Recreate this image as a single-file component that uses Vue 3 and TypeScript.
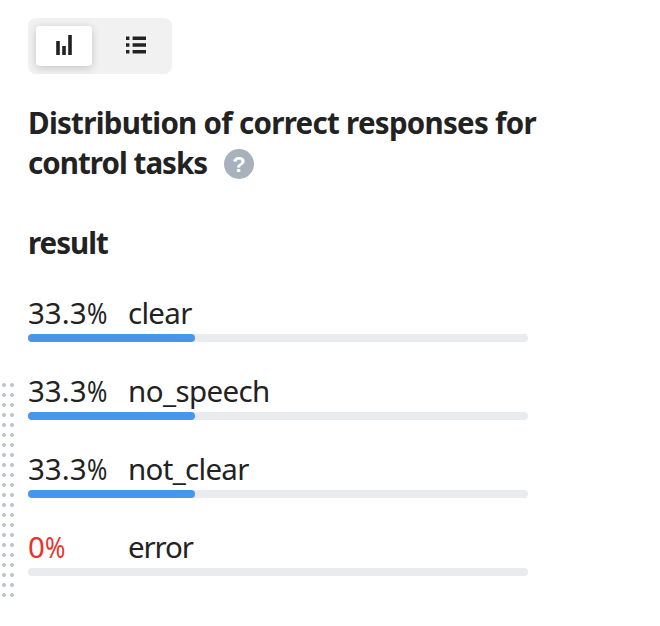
<script setup lang="ts">
import { ref } from 'vue'

interface ResultRow {
  name: string
  share: number
}

const view = ref<'chart' | 'list'>('chart')

const rows: ResultRow[] = [
  { name: 'clear', share: 33.3 },
  { name: 'no_speech', share: 33.3 },
  { name: 'not_clear', share: 33.3 },
  { name: 'error', share: 0 },
]
</script>

<template>
  <main class="panel">
    <div class="drag-handle"></div>
    <div class="switcher">
      <button class="switch" :class="{ active: view === 'chart' }" @click="view = 'chart'">
        <svg width="56" height="40" viewBox="0 0 56 40">
          <path d="M20.2 15h3.6v14h-3.6zM26.2 20h3.6v9h-3.6zM32.2 9h3.6v20h-3.6z" fill="#222" />
        </svg>
      </button>
      <button class="switch" :class="{ active: view === 'list' }" @click="view = 'list'">
        <svg width="56" height="40" viewBox="0 0 56 40">
          <path d="M18 10.6h3.4v3.5h-3.4zM24.6 10.6h13.4v3.5h-13.4zM18 17.2h3.4v3.5h-3.4zM24.6 17.2h13.4v3.5h-13.4zM18 23.9h3.4v3.5h-3.4zM24.6 23.9h13.4v3.5h-13.4z" fill="#222" />
        </svg>
      </button>
    </div>

    <h1 class="title">
      <span class="line first">Distribution of correct responses for</span>
      <span class="line"><span class="second">control tasks</span><span class="help">?</span></span>
    </h1>
    <h2 class="subtitle">result</h2>

    <ul class="rows">
      <li v-for="row in rows" :key="row.name" class="row">
        <div class="caption">
          <span class="percent" :class="{ empty: row.share === 0 }">{{ row.share }}<span class="sign">%</span></span>
          <span class="name" :class="row.name">{{ row.name }}</span>
        </div>
        <div class="track">
          <div class="fill" :style="{ width: row.share + '%' }"></div>
        </div>
      </li>
    </ul>
  </main>
</template>

<style>
body {
  background: #fff;
}
</style>

<style scoped>
.panel {
  position: relative;
  box-sizing: border-box;
  height: 626px;
  padding: 18px 28px 0;
  overflow: hidden;
  color: #222;
  font-family: "Noto Sans", "Open Sans", sans-serif;
}
.drag-handle {
  position: absolute;
  left: 0;
  top: 380px;
  width: 16px;
  height: 220px;
  background: radial-gradient(circle at 4px 5px, #c0c8cf 1.6px, transparent 2.3px) 0 0 / 8px 10px;
}
.switcher {
  display: flex;
  gap: 16px;
  box-sizing: border-box;
  width: 144px;
  height: 56px;
  padding: 8px;
  border-radius: 8px;
  background: #f1f1f1;
}
.switch {
  width: 56px;
  height: 40px;
  padding: 0;
  border: 0;
  border-radius: 4px;
  background: transparent;
}
.switch.active {
  background: #fff;
  box-shadow: 0 2px 8px rgba(0, 0, 0, 0.18);
}
.switch svg {
  display: block;
}
.title,
.subtitle {
  margin: 0;
  font-size: 29.5px;
  font-weight: 700;
  line-height: 38px;
  white-space: nowrap;
}
.title {
  margin-top: 30px;
}
.line {
  display: flex;
  align-items: flex-start;
  height: 40px;
}
.first {
  letter-spacing: -0.71px;
}
.second {
  width: 196px;
  letter-spacing: -0.95px;
}
.help {
  width: 30px;
  height: 30px;
  margin-top: 5px;
  border-radius: 50%;
  background: #a8b2bc;
  color: #fff;
  font: 700 22px/31px "Liberation Sans", sans-serif;
  text-align: center;
}
.subtitle {
  height: 40px;
  margin-top: 40px;
  letter-spacing: -1px;
}
.rows {
  display: flex;
  flex-direction: column;
  gap: 30px;
  margin: 30px 0 0;
  padding: 0;
  list-style: none;
}
.row {
  width: 500px;
  height: 48px;
}
.caption {
  display: flex;
  height: 40px;
  font-size: 29.5px;
  line-height: 38px;
}
.percent {
  width: 100px;
  letter-spacing: 0;
}
.percent.empty {
  color: #e8332a;
  letter-spacing: -0.3px;
}
.sign {
  display: inline-block;
  transform: scaleX(0.83);
  transform-origin: left;
}
.name {
  letter-spacing: -0.6px;
}
.name.clear,
.name.not_clear {
  letter-spacing: -0.7px;
}
.name.error {
  letter-spacing: -1.1px;
}
.track {
  height: 8px;
  border-radius: 4px;
  background: #eaebef;
}
.fill {
  height: 8px;
  border-radius: 4px;
  background: #4696ec;
}
</style>
